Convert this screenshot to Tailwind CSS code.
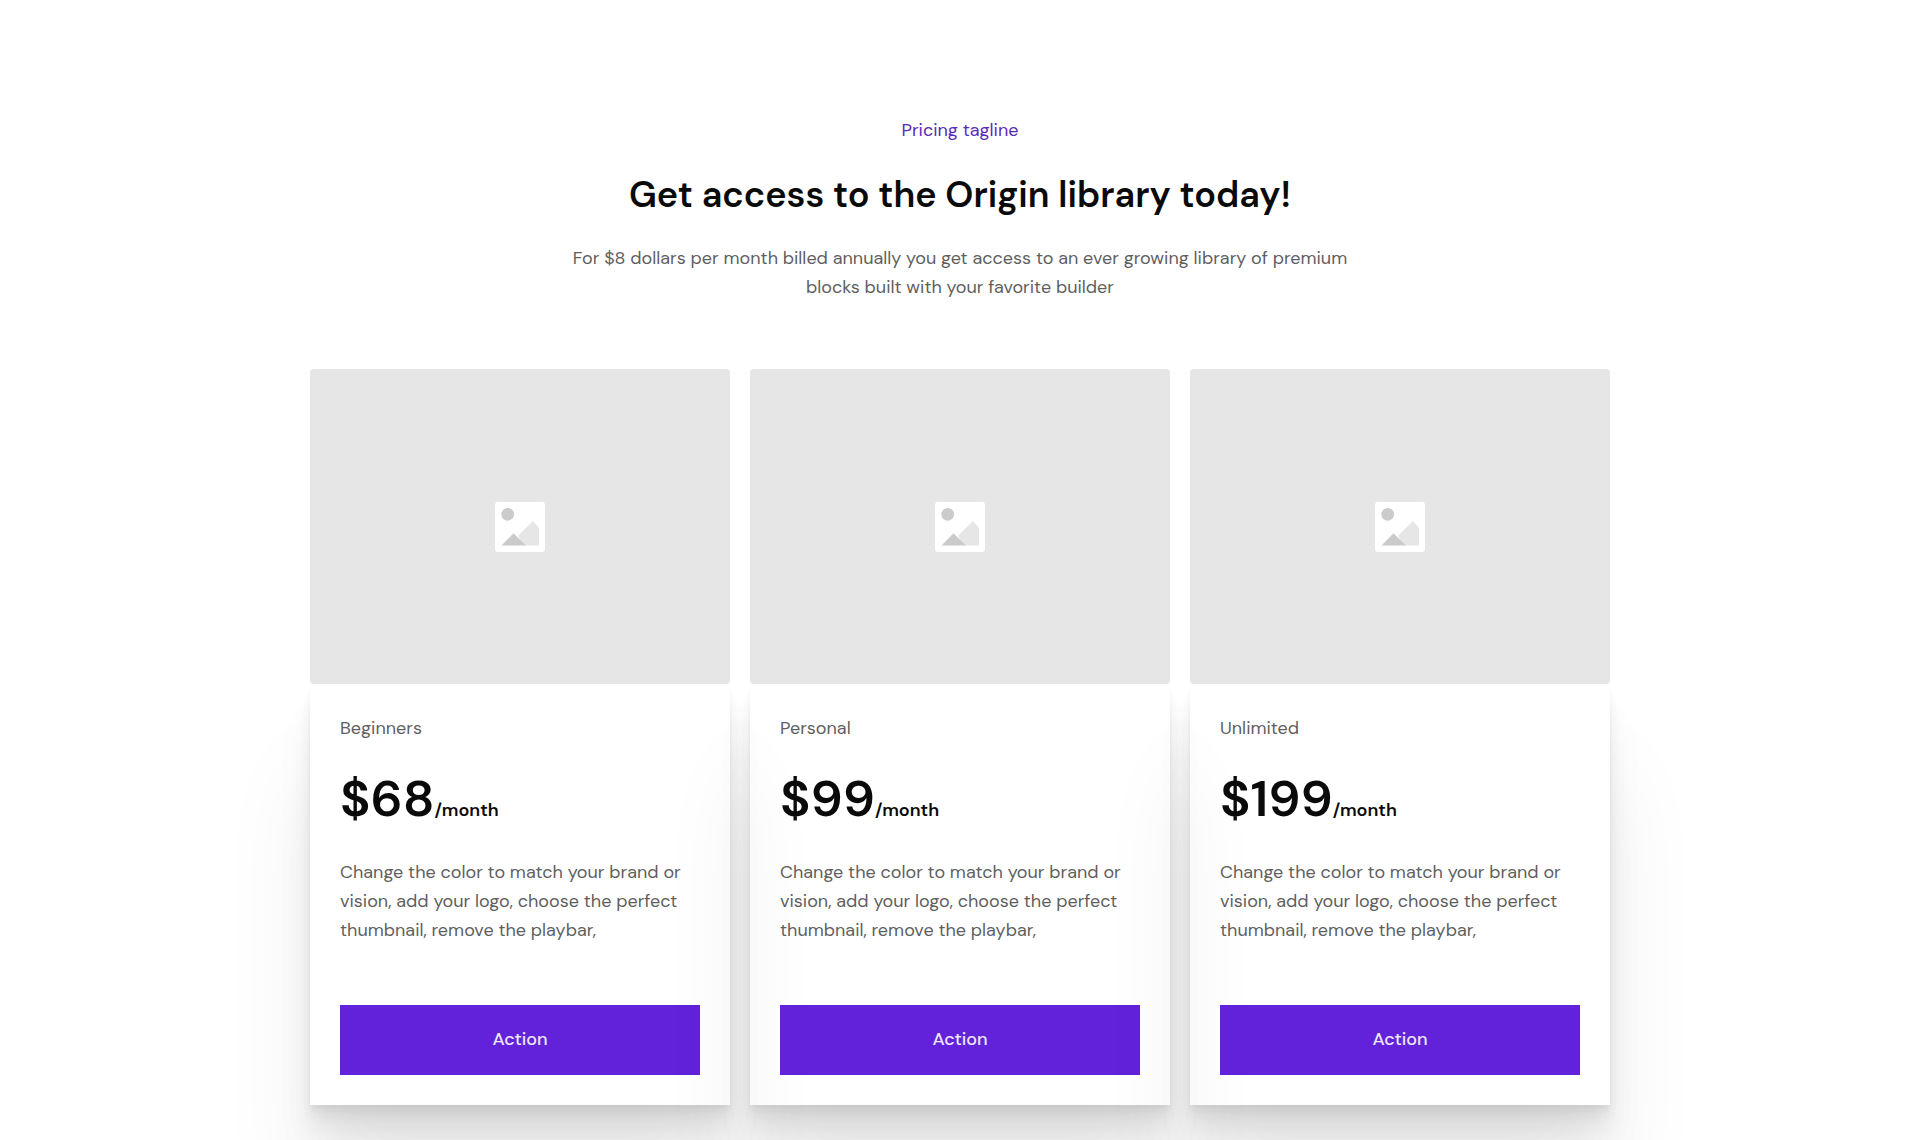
<!DOCTYPE html>
<html lang="en">
<head>
    <meta charset="UTF-8" />
    <meta name="viewport" content="width=device-width, initial-scale=1.0" />
    <title>Pricing</title>
    <script src="https://cdn.jsdelivr.net/npm/@tailwindcss/browser@4"></script>
    <style>
        body { font-family: "DM Sans", Inter, sans-serif; }
        /* Layered soft shadow, the card itself stays transparent */
        .card-shadow {
            box-shadow:
                0 90px 90px rgba(0, 0, 0, 0.07),
                0 38px 38px rgba(0, 0, 0, 0.05),
                0 20px 20px rgba(0, 0, 0, 0.042),
                0 11px 11px rgba(0, 0, 0, 0.035),
                0 6px 6px rgba(0, 0, 0, 0.028),
                0 2px 3px rgba(0, 0, 0, 0.02);
        }
    </style>
</head>
<body class="bg-white text-[18px] leading-[29px] text-[#5f5f5f]">
    <!-- Shared placeholder picture -->
    <svg class="hidden">
        <symbol id="placeholder" viewBox="0 0 50 50">
            <rect width="50" height="50" rx="3" fill="#fff" />
            <circle cx="12.7" cy="12.3" r="6.4" fill="#cbcbcb" />
            <path d="M23 34 37.5 19 44 25.500V43.500H29z" fill="#e6e6e6" />
            <path d="M6.500 43.500 18.500 31.300 31 43.500z" fill="#cbcbcb" />
        </symbol>
    </svg>

    <section class="px-5 pt-[116px] pb-[35px]">
        <header class="mx-auto max-w-[800px] text-center">
            <p class="text-[#5a2bb8]">Pricing tagline</p>
            <h2 class="mt-[27px] text-[36px] leading-[45px] font-semibold text-[#0a0a0a]">Get access to the Origin library today!</h2>
            <p class="mt-[27px]">For $8 dollars per month billed annually you get access to an ever growing library of premium blocks built with your favorite builder</p>
        </header>

        <div class="mx-auto mt-[67px] grid max-w-[1300px] gap-5 md:grid-cols-3">
            <article>
                <div class="flex aspect-[4/3] items-center justify-center rounded bg-[#e6e6e6]">
                    <svg class="size-[50px]"><use href="#placeholder" /></svg>
                </div>
                <div class="card-shadow p-[30px]">
                    <h3>Beginners</h3>
                    <p class="mt-[26px] leading-[60px] font-semibold text-[#0a0a0a]"><span class="text-[51px]">$68</span>/month</p>
                    <p class="mt-[18px]">Change the color to match your brand or vision, add your logo, choose the perfect thumbnail, remove the playbar,</p>
                    <button type="button" class="mt-[60px] h-[70px] w-full bg-[#6222d9] pb-0.5 font-medium text-[#efe6fc]">Action</button>
                </div>
            </article>

            <article>
                <div class="flex aspect-[4/3] items-center justify-center rounded bg-[#e6e6e6]">
                    <svg class="size-[50px]"><use href="#placeholder" /></svg>
                </div>
                <div class="card-shadow p-[30px]">
                    <h3>Personal</h3>
                    <p class="mt-[26px] leading-[60px] font-semibold text-[#0a0a0a]"><span class="text-[51px]">$99</span>/month</p>
                    <p class="mt-[18px]">Change the color to match your brand or vision, add your logo, choose the perfect thumbnail, remove the playbar,</p>
                    <button type="button" class="mt-[60px] h-[70px] w-full bg-[#6222d9] pb-0.5 font-medium text-[#efe6fc]">Action</button>
                </div>
            </article>

            <article>
                <div class="flex aspect-[4/3] items-center justify-center rounded bg-[#e6e6e6]">
                    <svg class="size-[50px]"><use href="#placeholder" /></svg>
                </div>
                <div class="card-shadow p-[30px]">
                    <h3>Unlimited</h3>
                    <p class="mt-[26px] leading-[60px] font-semibold text-[#0a0a0a]"><span class="text-[51px]">$199</span>/month</p>
                    <p class="mt-[18px]">Change the color to match your brand or vision, add your logo, choose the perfect thumbnail, remove the playbar,</p>
                    <button type="button" class="mt-[60px] h-[70px] w-full bg-[#6222d9] pb-0.5 font-medium text-[#efe6fc]">Action</button>
                </div>
            </article>
        </div>
    </section>
</body>
</html>
